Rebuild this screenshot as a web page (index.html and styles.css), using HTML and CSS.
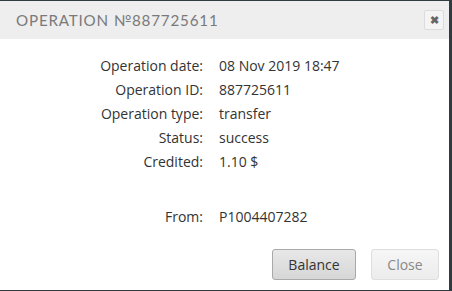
FILE: index.html
```html
<!DOCTYPE html>
<html lang="en">
<head>
  <meta charset="UTF-8">
  <title>Operation</title>
  <link rel="stylesheet" href="styles.css">
</head>
<body>
  <div class="dialog">
    <div class="dialog-header">
      <span class="dialog-title">Operation №887725611</span>
      <button class="dialog-close">&#10006;</button>
    </div>
    <div class="dialog-body">
      <dl class="details">
        <dt>Operation date:</dt><dd>08 Nov 2019 18:47</dd>
        <dt>Operation ID:</dt><dd>887725611</dd>
        <dt>Operation type:</dt><dd>transfer</dd>
        <dt>Status:</dt><dd>success</dd>
        <dt>Credited:</dt><dd>1.10 $</dd>
        <dt class="gap">From:</dt><dd class="gap">P1004407282</dd>
      </dl>
    </div>
    <div class="dialog-footer">
      <button class="btn btn-primary">Balance</button>
      <button class="btn btn-muted">Close</button>
    </div>
  </div>
</body>
</html>
```
FILE: styles.css
```css
* { box-sizing: border-box; margin: 0; padding: 0; }
html, body { height: 100%; }
body {
  background: #2f3b40;
  font-family: 'Open Sans', sans-serif;
}
.dialog {
  height: 289px;
  width: 449px;
  margin-top: 1px;
  background: #fff;
  display: flex;
  flex-direction: column;
}
.dialog-header {
  height: 38px;
  background: #eeeeee;
  display: flex;
  align-items: center;
  justify-content: space-between;
  padding: 0 5px 0 16px;
}
.dialog-title {
  color: #7a7a7a;
  font-family: 'Lato', sans-serif;
  font-size: 15.2px;
  letter-spacing: 0.8px;
  text-transform: uppercase;
}
.dialog-close {
  width: 20px;
  height: 20px;
  border: 1px solid #dcdcdc;
  border-radius: 2px;
  background: #f4f4f4;
  color: #666;
  font-size: 11px;
  font-weight: bold;
  line-height: 18px;
  cursor: pointer;
}
.dialog-body {
  flex: 1;
  padding-top: 15px;
}
.details {
  display: grid;
  grid-template-columns: 203px auto;
  column-gap: 16px;
  font-size: 14px;
  color: #333;
  line-height: 24px;
}
.details dt { text-align: right; }
.details .gap { margin-top: 31px; }
.dialog-footer {
  display: flex;
  justify-content: flex-end;
  gap: 15px;
  padding: 0 10px 10px 0;
}
.btn {
  height: 31px;
  border-radius: 3px;
  font-family: 'Open Sans', sans-serif;
  font-size: 14px;
  padding: 0 14px;
  cursor: pointer;
}
.btn-primary {
  width: 84px;
  background: linear-gradient(#e8e8e8, #d6d6d6);
  border: 1px solid #a9a9a9;
  color: #333;
}
.btn-muted {
  width: 68px;
  background: linear-gradient(#f6f6f6, #ececec);
  border: 1px solid #dedede;
  color: #888;
}
```
